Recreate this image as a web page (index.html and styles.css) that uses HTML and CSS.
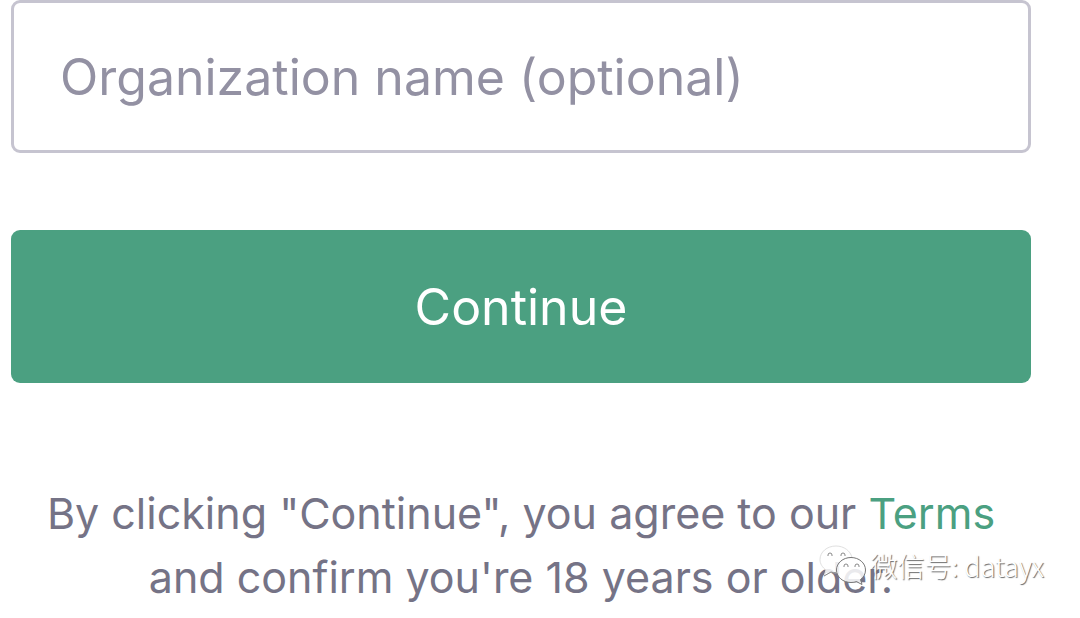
FILE: index.html
```
<!DOCTYPE html>
<html lang="en">
<head>
    <meta charset="UTF-8">
    <meta name="viewport" content="width=device-width, initial-scale=1.0">
    <title>Tell us about you</title>
    <link rel="stylesheet" href="styles.css">
</head>
<body>
    <form class="signup">
        <input type="text" class="org-input" aria-label="Organization name (optional)" placeholder="Organization name (optional)">
        <button type="button" class="continue-btn">Continue</button>
        <p class="terms">By clicking "Continue", you agree to our <a href="#">Terms</a><br>and confirm you're 18 years or older.</p>
    </form>

    <div class="watermark">
        <svg class="wechat-icon" viewBox="0 0 48 42" aria-hidden="true">
            <path class="bubble" d="M17 1C8 1 1 7 1 14.500C1 19 3.500 22.500 7 25L5 31L12 27C13.500 27.600 15 27.800 18 27.800C17 20 22 13 33 12.500C31.500 6 25 1 17 1Z"/>
            <path class="bubble front" d="M32 12.500C24 12.500 17.500 18 17.500 25S24 37.500 32 37.500C34 37.500 36 37.200 37.500 36.600L43 39.500L41.500 34.500C44.500 32.500 46.500 29 46.500 25C46.500 18 40 12.500 32 12.500Z"/>
            <path class="line" d="M5 31L12 27C13.500 27.600 15 27.800 17 27.800"/>
            <g class="line">
                <path d="M9 11v-1a2 2 0 0 1 4 0v1"/>
                <path d="M22 11v-1a2 2 0 0 1 4 0v1"/>
                <path d="M25 22v-1a2 2 0 0 1 4 0v1"/>
                <path d="M36 22v-1a2 2 0 0 1 4 0v1"/>
            </g>
        </svg>
        <span>微信号: datayx</span>
    </div>
</body>
</html>
```
FILE: styles.css
```
* {
    box-sizing: border-box;
}

body {
    font-family: Inter, 'Liberation Sans', 'Noto Sans CJK SC', sans-serif;
    background-color: #ffffff;
    margin: 0;
    position: relative;
}

.signup {
    padding: 0 49px 0 11px;
}

.org-input {
    display: block;
    width: 100%;
    height: 153px;
    padding: 0 46px;
    border: 3px solid #c6c4d0;
    border-radius: 9px;
    font-family: inherit;
    font-size: 50px;
    color: #353740;
}

.org-input::placeholder {
    color: #9391a3;
    opacity: 1;
}

.continue-btn {
    display: block;
    width: 100%;
    height: 153px;
    margin-top: 77px;
    border: none;
    border-radius: 9px;
    background-color: #4ba081;
    color: #ffffff;
    font-family: inherit;
    font-size: 50px;
    cursor: pointer;
}

.terms {
    margin: 98px 0 0;
    color: #757386;
    font-size: 43px;
    line-height: 64px;
    text-align: center;
    white-space: nowrap;
}

.terms a {
    color: #4ba081;
    text-decoration: none;
}

/* account badge laid over the form */
.watermark {
    position: absolute;
    right: 36px;
    bottom: 22px;
    display: flex;
    align-items: center;
    gap: 4px;
    color: #ffffff;
    font-family: 'Noto Sans CJK SC', sans-serif;
    font-size: 27px;
    font-weight: 300;
    line-height: 42px;
    text-shadow: 1px 1px 1px #666666;
}

.wechat-icon {
    width: 48px;
    height: 42px;
}

.bubble {
    fill: #ffffff;
    fill-opacity: 0.85;
    stroke: #e0e0e0;
}

.front {
    stroke: #777777;
}

.line {
    fill: none;
    stroke: #888888;
}
```
